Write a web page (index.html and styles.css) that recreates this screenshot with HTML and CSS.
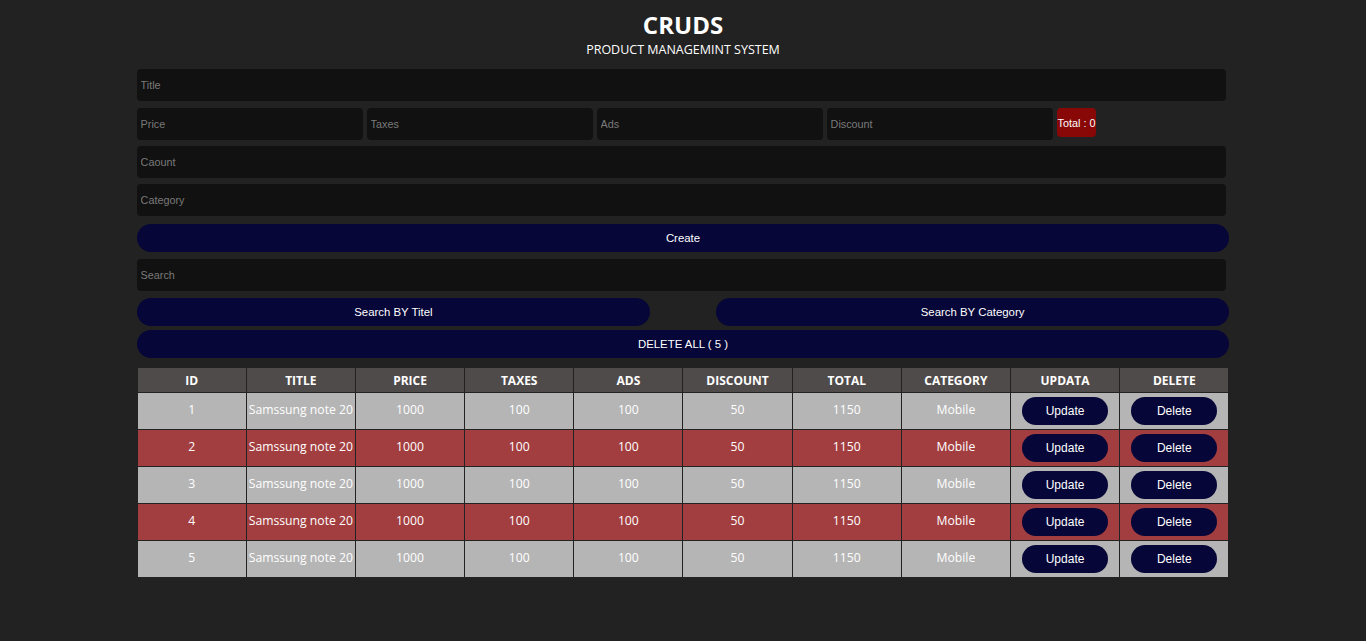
FILE: index.html
```html
<!DOCTYPE html>
<html lang="en">
<head>
<meta charset="utf-8">
<title>CRUDS</title>
<link rel="stylesheet" href="styles.css">
</head>
<body>
<div class="container">
  <header class="head">
    <h2 class="title">CRUDS</h2>
    <p class="subtitle">PRODUCT MANAGEMINT SYSTEM</p>
  </header>
  <div class="inputs">
    <input class="field f-title" type="text" placeholder="Title">
    <div class="price-row">
      <input class="field price" type="number" placeholder="Price">
      <input class="field price" type="number" placeholder="Taxes">
      <input class="field price" type="number" placeholder="Ads">
      <input class="field price" type="number" placeholder="Discount">
      <small class="total">Total : 0</small>
    </div>
    <input class="field f-count" type="number" placeholder="Caount">
    <input class="field f-cat" type="text" placeholder="Category">
    <button class="btn btn-create">Create</button>
  </div>
  <div class="outputs">
    <input class="field f-search" type="text" placeholder="Search">
    <div class="search-btns">
      <button class="btn btn-half">Search BY Titel</button>
      <button class="btn btn-half">Search BY Category</button>
    </div>
    <button class="btn btn-delall">DELETE ALL ( 5 )</button>
    <table class="table">
      <thead>
        <tr><th>ID</th><th>TITLE</th><th>PRICE</th><th>TAXES</th><th>ADS</th><th>DISCOUNT</th><th>TOTAL</th><th>CATEGORY</th><th>UPDATA</th><th>DELETE</th></tr>
      </thead>
      <tbody>
        <tr class="r-grey"><td>1</td><td>Samssung note 20</td><td>1000</td><td>100</td><td>100</td><td>50</td><td>1150</td><td>Mobile</td><td><button class="btn btn-row">Update</button></td><td><button class="btn btn-row">Delete</button></td></tr>
        <tr class="r-red"><td>2</td><td>Samssung note 20</td><td>1000</td><td>100</td><td>100</td><td>50</td><td>1150</td><td>Mobile</td><td><button class="btn btn-row">Update</button></td><td><button class="btn btn-row">Delete</button></td></tr>
        <tr class="r-grey"><td>3</td><td>Samssung note 20</td><td>1000</td><td>100</td><td>100</td><td>50</td><td>1150</td><td>Mobile</td><td><button class="btn btn-row">Update</button></td><td><button class="btn btn-row">Delete</button></td></tr>
        <tr class="r-red"><td>4</td><td>Samssung note 20</td><td>1000</td><td>100</td><td>100</td><td>50</td><td>1150</td><td>Mobile</td><td><button class="btn btn-row">Update</button></td><td><button class="btn btn-row">Delete</button></td></tr>
        <tr class="r-grey"><td>5</td><td>Samssung note 20</td><td>1000</td><td>100</td><td>100</td><td>50</td><td>1150</td><td>Mobile</td><td><button class="btn btn-row">Update</button></td><td><button class="btn btn-row">Delete</button></td></tr>
      </tbody>
    </table>
  </div>
</div>
</body>
</html>
```
FILE: styles.css
```css
* { box-sizing: border-box; }
html, body { margin: 0; padding: 0; }
body {
  background: #222222;
  color: #ffffff;
  font-family: "Open Sans", "Noto Sans", sans-serif;
  height: 641px;
  overflow: hidden;
}
.container {
  width: 80%;
  margin: 0 auto;
}
.head {
  text-align: center;
  padding-top: 10px;
}
.title {
  margin: 0;
  font-size: 24px;
  line-height: 30px;
  font-weight: 700;
}
.subtitle {
  margin: 2px 0 0;
  font-size: 12.5px;
  line-height: 16px;
}
.inputs {
  display: flex;
  flex-direction: column;
  margin-top: 11px;
}
.field {
  display: block;
  width: calc(100% - 3px);
  height: 32px;
  background: #111111;
  border: none;
  outline: none;
  border-radius: 4px;
  padding: 0 4px;
  color: #ffffff;
  font-family: "Liberation Sans", Arial, sans-serif;
  font-size: 10.8px;
}
.field::placeholder { color: #7a7a7a; }
.price-row {
  display: flex;
  align-items: flex-start;
  gap: 4px;
  margin-top: 7px;
}
.price {
  width: 226px;
  flex: 0 0 226px;
}
.total {
  display: flex;
  align-items: center;
  height: 29px;
  padding: 0 1px;
  background: #880808;
  border-radius: 4px;
  font-family: "Liberation Sans", Arial, sans-serif;
  font-size: 10.8px;
  color: #fff;
}
.f-count { margin-top: 6px; }
.f-cat { margin-top: 6px; }
.btn {
  display: block;
  border: none;
  background: #060638;
  color: #ffffff;
  font-family: "Liberation Sans", Arial, sans-serif;
  font-size: 11.4px;
  height: 28px;
  border-radius: 14px;
  cursor: pointer;
}
.btn-create {
  width: 100%;
  margin-top: 8px;
}
.outputs {
  display: flex;
  flex-direction: column;
}
.f-search { margin-top: 7px; }
.search-btns {
  display: flex;
  justify-content: space-between;
  margin-top: 7px;
}
.btn-half { width: 47%; }
.btn-delall {
  width: 100%;
  margin-top: 4px;
}
.table {
  width: 100%;
  margin-top: 9px;
  border-collapse: collapse;
  table-layout: fixed;
  text-align: center;
}
.table th, .table td {
  border: 1px solid #222222;
  padding: 0;
  overflow: hidden;
  white-space: nowrap;
}
.table th {
  background: #4f4b4a;
  height: 25px;
  font-size: 12px;
  font-weight: 700;
}
.table td {
  height: 37px;
  font-size: 12.2px;
  padding-bottom: 3px;
}
.r-grey td { background: #b5b5b5; }
.r-red td { background: #a33e40; }
.table td:has(.btn-row) { padding-bottom: 0; }
.btn-row {
  width: 86px;
  margin: 0 auto;
  font-size: 12px;
}
```
